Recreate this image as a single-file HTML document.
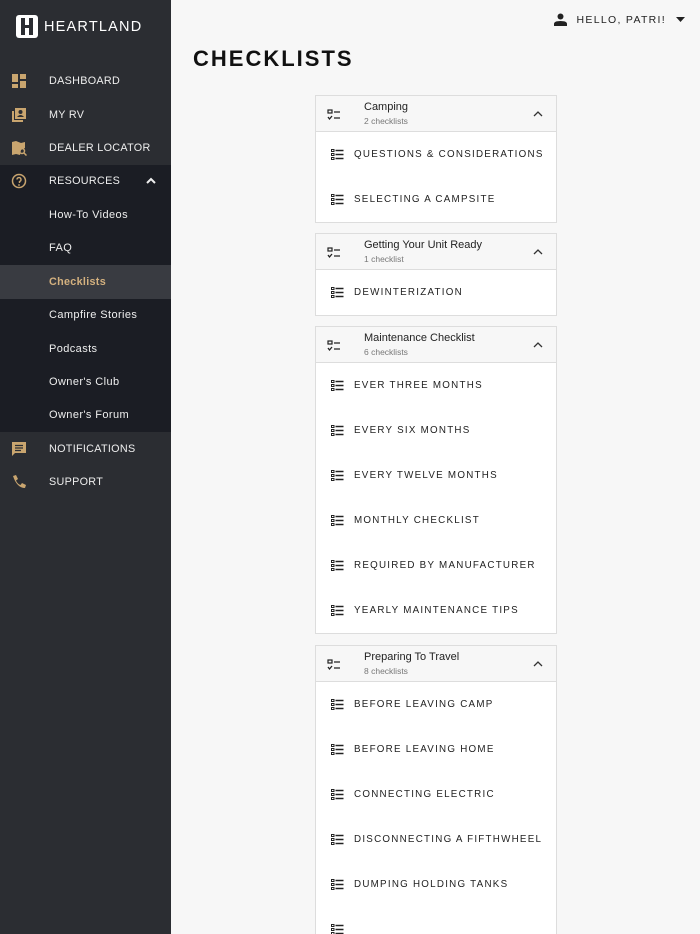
<!DOCTYPE html><html><head><style>
*{box-sizing:border-box;margin:0;padding:0}
html,body{width:700px;height:934px;overflow:hidden}
body{font-family:"Liberation Sans",sans-serif;background:#f7f7f7;position:relative}
#sb{position:absolute;left:0;top:0;width:171px;height:934px;background:#2b2d32}
.logo{position:absolute;left:16px;top:15px;display:flex;align-items:center}
.logo .box{width:22px;height:23px;background:#fff;border-radius:3px;position:relative}
.logo span{color:#fff;font-size:14.5px;letter-spacing:1.2px;margin-left:6px}
.nav{position:absolute;left:0;width:171px;height:33.5px;display:flex;align-items:center;color:#eee;font-size:10.8px;letter-spacing:.3px;white-space:nowrap}
.nav .t{position:absolute;left:49px}
.nav svg{position:absolute;left:11px}
.sub .t{letter-spacing:.4px;font-size:11px}
.act{background:#393b41;color:#d4b17f;font-weight:bold}
#main{position:absolute;left:171px;top:0;width:529px;height:934px;overflow:hidden}
.top{position:absolute;right:14px;top:13px;font-size:10.5px;letter-spacing:1.3px;color:#222;display:flex;align-items:center}
h1{position:absolute;left:22px;top:46px;font-size:22px;letter-spacing:2px;color:#111}
.card{position:absolute;left:144px;width:242px;background:#fff;border:1px solid #ddd}
.hd{height:36px;background:#f7f7f7;border-bottom:1px solid #ddd;position:relative}
.hd .ti{position:absolute;left:48px;top:5px;font-size:11px;color:#222}
.hd .st{position:absolute;left:48px;top:20px;font-size:8.5px;color:#777}
.hd .ic{position:absolute;left:11px;top:12px}
.hd .ch{position:absolute;right:13px;top:14px;line-height:0}
.it{height:45px;position:relative;font-size:9.8px;letter-spacing:1.25px;color:#222;white-space:nowrap}
.it .t{position:absolute;left:38px;top:17px}
.it svg{position:absolute;left:15px;top:17px}
</style></head><body>
<div id="sb">
<div class="logo"><div class="box"><div style="position:absolute;left:5px;top:3px;width:4px;height:17px;background:#2b2d32"></div><div style="position:absolute;left:13px;top:3px;width:4px;height:17px;background:#2b2d32"></div><div style="position:absolute;left:9px;top:10px;width:4px;height:3px;background:#2b2d32"></div></div><span>HEARTLAND</span></div>
<div class="nav" style="top:64px"><svg width="16" height="16"><rect x="1" y="1" width="6" height="8" fill="#c9a56f"/><rect x="9" y="1" width="6" height="5" fill="#c9a56f"/><rect x="1" y="11" width="6" height="4" fill="#c9a56f"/><rect x="9" y="8" width="6" height="7" fill="#c9a56f"/></svg><span class="t">DASHBOARD</span></div>
<div class="nav" style="top:98px"><svg width="16" height="16"><rect x="4" y="1" width="11" height="11" fill="#c9a56f"/><rect x="1" y="4" width="2" height="11" fill="#c9a56f"/><rect x="1" y="13" width="11" height="2" fill="#c9a56f"/><circle cx="9.5" cy="5" r="2" fill="#2b2d32"/><path d="M6 10q3.5-4 7 0z" fill="#2b2d32"/></svg><span class="t">MY RV</span></div>
<div class="nav" style="top:131px"><svg width="16" height="16"><path d="M1 2l4-1 5 2 4-1v6l-4 2-1 5-4-1-4 1z" fill="#c9a56f"/><circle cx="11" cy="11" r="2.5" fill="none" stroke="#c9a56f" stroke-width="1.5"/><path d="M13 13l2.5 2.5" stroke="#c9a56f" stroke-width="1.5"/></svg><span class="t">DEALER LOCATOR</span></div>
<div style="position:absolute;top:165px;left:0;width:171px;height:267px;background:#1b1d24"></div>
<div class="nav" style="top:164px"><svg width="16" height="16"><circle cx="8" cy="8" r="6.5" fill="none" stroke="#c9a56f" stroke-width="1.5"/><path d="M6 6.5a2 2 0 1 1 2.5 2v1.5" fill="none" stroke="#c9a56f" stroke-width="1.4"/><circle cx="8" cy="12" r=".9" fill="#c9a56f"/></svg><span class="t">RESOURCES</span><svg style="left:145px" width="12" height="8"><path d="M2 6l4-4 4 4" fill="none" stroke="#eee" stroke-width="2"/></svg></div>
<div class="nav sub" style="top:198px"><span class="t">How-To Videos</span></div>
<div class="nav sub" style="top:231px"><span class="t">FAQ</span></div>
<div class="nav act" style="top:265px"><span class="t">Checklists</span></div>
<div class="nav sub" style="top:298px"><span class="t">Campfire Stories</span></div>
<div class="nav sub" style="top:332px"><span class="t">Podcasts</span></div>
<div class="nav sub" style="top:365px"><span class="t">Owner's Club</span></div>
<div class="nav sub" style="top:398px"><span class="t">Owner's Forum</span></div>
<div class="nav" style="top:432px"><svg width="16" height="16"><path d="M1 1h14v11H4l-3 3z" fill="#c9a56f"/><path d="M4 4.5h8M4 7h8M4 9.5h6" stroke="#2b2d32" stroke-width="1.2"/></svg><span class="t">NOTIFICATIONS</span></div>
<div class="nav" style="top:465px"><svg width="16" height="16"><path d="M2 2l3-1 2 4-2 1.5q1.5 3.5 4.5 4.5L11 9l4 2-1 3Q6 14 2 2z" fill="#c9a56f"/></svg><span class="t">SUPPORT</span></div>
</div>
<div id="main">
<div class="top"><svg width="13" height="13" style="margin-right:10px"><circle cx="6.5" cy="3.5" r="3" fill="#222"/><path d="M0 13v-2q0-3 6.5-3t6.5 3v2z" fill="#222"/></svg>HELLO, PATRI!<svg width="10" height="6" style="margin-left:10px"><path d="M0 0h9l-4.5 5z" fill="#222"/></svg></div>
<h1>CHECKLISTS</h1>
<div id="cards"></div>
</div>
<script>
const H='<svg width="14" height="12"><rect x="1" y="1" width="4" height="3" fill="none" stroke="#222" stroke-width="1.2"/><path d="M7 3h6M7 9h6M1 8l1.5 2L5 7" fill="none" stroke="#222" stroke-width="1.3"/></svg>';
const I='<svg width="13" height="11"><g fill="none" stroke="#222" stroke-width="1"><rect x=".5" y=".5" width="2.5" height="2"/><rect x=".5" y="4.5" width="2.5" height="2"/><rect x=".5" y="8.5" width="2.5" height="2"/></g><path d="M4.5 1.5h8M4.5 5.5h8M4.5 9.5h8" stroke="#222" stroke-width="1.4"/></svg>';
const C='<svg width="10" height="7"><path d="M1 6l4-4 4 4" fill="none" stroke="#333" stroke-width="1.3"/></svg>';
const data=[[95,"Camping","2 checklists",["QUESTIONS &amp; CONSIDERATIONS","SELECTING A CAMPSITE"]],[233,"Getting Your Unit Ready","1 checklist",["DEWINTERIZATION"]],[326,"Maintenance Checklist","6 checklists",["EVER THREE MONTHS","EVERY SIX MONTHS","EVERY TWELVE MONTHS","MONTHLY CHECKLIST","REQUIRED BY MANUFACTURER","YEARLY MAINTENANCE TIPS"]],[645,"Preparing To Travel","8 checklists",["BEFORE LEAVING CAMP","BEFORE LEAVING HOME","CONNECTING ELECTRIC","DISCONNECTING A FIFTHWHEEL","DUMPING HOLDING TANKS",""]]];
let h='';for(const[t,a,b,its]of data){h+=`<div class="card" style="top:${t}px"><div class="hd"><span class="ic">${H}</span><span class="ti">${a}</span><span class="st">${b}</span><span class="ch">${C}</span></div>`;for(const x of its)h+=`<div class="it">${I}<span class="t">${x}</span></div>`;h+='</div>';}
document.getElementById('cards').innerHTML=h;
</script>
</body></html>
